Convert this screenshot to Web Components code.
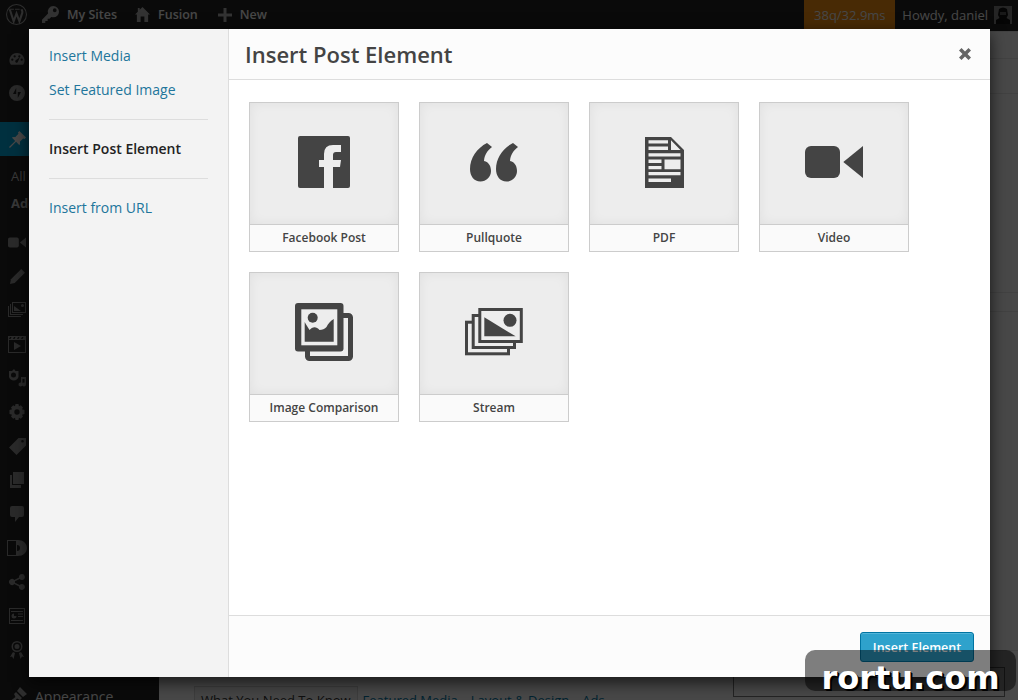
<!DOCTYPE html>
<html>
<head>
<meta charset="utf-8">
<title>Insert Post Element</title>
<style>
  html, body { margin: 0; height: 100%; overflow: hidden; background: #f1f1f1; font-family: "Open Sans", "Liberation Sans", sans-serif; }
</style>
</head>
<body>
<wp-admin>
  <admin-bar slot="bar"></admin-bar>
  <admin-menu slot="menu"></admin-menu>
  <edit-screen slot="screen"></edit-screen>
</wp-admin>
<media-modal>
  <nav-link slot="nav" kind="visited">Insert Media</nav-link>
  <nav-link slot="nav">Set Featured Image</nav-link>
  <nav-sep slot="nav"></nav-sep>
  <nav-link slot="nav" kind="active">Insert Post Element</nav-link>
  <nav-sep slot="nav"></nav-sep>
  <nav-link slot="nav" kind="visited">Insert from URL</nav-link>

  <element-tile icon="facebook" w="52" h="52">Facebook Post</element-tile>
  <element-tile icon="quote" w="48" h="39">Pullquote</element-tile>
  <element-tile icon="pdf" w="39" h="51">PDF</element-tile>
  <element-tile icon="video" w="58" h="32">Video</element-tile>
  <element-tile icon="compare" w="58" h="58">Image Comparison</element-tile>
  <element-tile icon="stream" w="58" h="48">Stream</element-tile>
</media-modal>
<water-mark>rortu.com</water-mark>

<script>
const ICONS = {
  // tile icons
  facebook: '<svg viewBox="0 0 52 52"><path fill-rule="evenodd" d="M2 0H50Q52 0 52 2V50Q52 52 50 52H35V31H42L43 24H35V19Q35 16 38 16H43V9H35Q26 9 26 18V24H21V31H26V52H2Q0 52 0 50V2Q0 0 2 0Z"/></svg>',
  quote: '<svg viewBox="0 0 48 39"><path d="M17 0L22 4C17 8 14.5 12 14 18C19 19 21 23.5 21 28C21 34 16 38.5 10.5 38.5C4 38.5 0 33 0 26C0 15 7 5 17 0Z"/><path transform="translate(26 0)" d="M17 0L22 4C17 8 14.5 12 14 18C19 19 21 23.5 21 28C21 34 16 38.5 10.5 38.5C4 38.5 0 33 0 26C0 15 7 5 17 0Z"/></svg>',
  pdf: '<svg viewBox="0 0 39 51"><path fill-rule="evenodd" d="M0 0H26L39 13V51H0ZM3.5 3.3V6.6H23V3.3ZM3.5 9.6V13H23V9.6ZM26 3.3V13H35.5ZM3.5 16.3V19.6H35.5V16.3ZM3.5 22.6V26H16.5V22.6ZM3.5 29V32.3H16.5V29ZM19.5 22.6V32.3H35.5V22.6ZM3.5 35V38.3H35.5V35ZM3.5 41.6V45H26V41.6Z"/></svg>',
  video: '<svg viewBox="0 0 58 32"><rect width="35" height="32" rx="6"/><path d="M38.3 16L58 0V32Z"/></svg>',
  compare: '<svg viewBox="0 0 58 58"><rect x="12.5" y="12.5" width="43" height="43" rx="2" fill="none" stroke="currentColor" stroke-width="5"/><rect width="48.5" height="48.5" rx="3"/><rect x="6.3" y="6.3" width="36" height="36" fill="#ededed"/><circle cx="17.7" cy="14.7" r="5"/><path d="M9.7 19C11 22 13 24 14.5 27C17 24 21 22.5 24.5 27C27 27 30 26 31.5 24C33 21 35 18 38.7 16V38.7H9.7Z"/></svg>',
  stream: '<svg viewBox="0 0 58 48"><rect x="1.5" y="14.2" width="42" height="31.6" fill="none" stroke="currentColor" stroke-width="3"/><rect x="8.2" y="7.5" width="41.3" height="32" fill="#ededed" stroke="currentColor" stroke-width="3"/><rect x="14.8" y="1.5" width="41.5" height="32" fill="#ededed" stroke="currentColor" stroke-width="3"/><path d="M19.3 9.3L50.6 28.3H19.3Z"/><circle cx="45" cy="12.3" r="6.5"/></svg>',
  // admin bar
  wp: '<svg viewBox="0 0 20 20"><circle cx="10" cy="10" r="9.500" fill="none" stroke="currentColor"/><path fill="none" stroke="currentColor" stroke-width="2" d="M3.700 5.500L7.300 16.500L10 9L12.800 16.500L15.500 8.500C16 7 15 6 14.800 5"/><path fill="none" stroke="currentColor" d="M3 5H7.500M8.500 5H13"/></svg>',
  key: '<svg viewBox="0 0 18 18"><path d="M12 0a6 6 0 0 1 0 12c-.8 0-1.500-.1-2.200-.4L8 13.500H6V16H3.500V18H0V14.500L6.400 8A6 6 0 0 1 12 0ZM13.500 2.500a2 2 0 1 0 0 4a2 2 0 0 0 0-4Z"/></svg>',
  home: '<svg viewBox="0 0 16 16"><path d="M8 0L16 8H14V16H10V10H6V16H2V8H0L3 5V1H5V3Z"/></svg>',
  plus: '<svg viewBox="0 0 14 14"><path d="M5.500 0H8.500V5.500H14V8.500H8.500V14H5.500V8.500H0V5.500H5.500Z"/></svg>',
  // admin menu
  gauge: '<svg viewBox="0 0 16 16"><path fill-rule="evenodd" d="M8 1a8 8 0 0 1 6.500 12.700H1.500A8 8 0 0 1 8 1ZM3 7a1.200 1.200 0 1 0 0 2.400A1.200 1.200 0 0 0 3 7ZM5.500 3.500a1.200 1.200 0 1 0 0 2.400a1.200 1.200 0 0 0 0-2.400ZM10.500 3.500a1.200 1.200 0 1 0 0 2.400a1.200 1.200 0 0 0 0-2.400ZM13 7a1.200 1.200 0 1 0 0 2.400A1.200 1.200 0 0 0 13 7ZM11 5.500L7 8.500a1.500 1.500 0 1 0 2 2Z"/></svg>',
  jet: '<svg viewBox="0 0 16 16"><path fill-rule="evenodd" d="M8 0a8 8 0 1 0 0 16A8 8 0 0 0 8 0ZM7.200 3V9H4ZM8.800 13V7H12Z"/></svg>',
  pin: '<svg viewBox="0 0 18 18"><path d="M11 0L18 7L16.500 8.500L15 8L11.500 11.500C12 13 11.800 14 11 15L7.500 11.500L1 18L0 17L6.500 10.500L3 7C4 6.200 5 6 6.500 6.500L10 3L9.500 1.500Z"/></svg>',
  pencil: '<svg viewBox="0 0 16 16"><path d="M12 0L16 4L5 15L0 16L1 11Z"/></svg>',
  media: '<svg viewBox="0 0 18 16"><path fill-rule="evenodd" d="M4 0H18V11H4ZM5 1V10H17V1ZM14.500 2a1.500 1.500 0 1 0 0 3a1.500 1.500 0 0 0 0-3ZM6 9V4L13 9ZM2 2H3V12H15V13H2ZM0 4H1V14H13V15H0Z"/></svg>',
  film: '<svg viewBox="0 0 18 17"><path fill-rule="evenodd" d="M0 0H18V17H0ZM1 4V16H17V4ZM6 6L13 10L6 14ZM2 1L1 3H2.500L3.500 1ZM6 1L5 3H6.500L7.500 1ZM10 1L9 3H10.500L11.500 1ZM14 1L13 3H14.500L15.500 1Z"/></svg>',
  mix: '<svg viewBox="0 0 18 18"><path fill-rule="evenodd" d="M6 0L7.500 2H10.500V8A5 5 0 0 1 1 8V2H4ZM5.500 3.500a2.500 2.500 0 1 0 0 5a2.500 2.500 0 0 0 0-5Z"/><path d="M13 8H18V15.500a2 2 0 1 1-1.500-2V10H14.500V15.500a2 2 0 1 1-1.500-2V8Z"/></svg>',
  gear: '<svg viewBox="0 0 16 16"><path fill-rule="evenodd" d="M6.500 0H9.500L10 2.200L11.800 1.200L14 3.400L13 5.300L15.500 6V10L13 10.700L14 12.600L11.800 14.800L10 13.800L9.500 16H6.500L6 13.800L4.200 14.800L2 12.600L3 10.700L.5 10V6L3 5.300L2 3.400L4.200 1.200L6 2.200ZM8 5.300a2.700 2.700 0 1 0 0 5.400a2.700 2.700 0 0 0 0-5.400Z"/></svg>',
  tag: '<svg viewBox="0 0 17 17"><path fill-rule="evenodd" d="M9.500 0H17V7.500L7.500 17L0 9.500ZM13.500 2a1.300 1.300 0 1 0 0 2.600a1.300 1.300 0 0 0 0-2.600Z"/></svg>',
  pages: '<svg viewBox="0 0 14 16"><path d="M3 0H14V12H3ZM0 3H2V13H11V16H0Z"/></svg>',
  bubble: '<svg viewBox="0 0 14 16"><path d="M2 0H12Q14 0 14 2V9Q14 11 12 11H9L5 16V11H2Q0 11 0 9V2Q0 0 2 0Z"/></svg>',
  disc: '<svg viewBox="0 0 20 16"><path fill-rule="evenodd" d="M0 0H11C16 0 20 3.500 20 8S16 16 11 16H0ZM1 1V15H9V1ZM10 5V11A3 3 0 0 0 10 5Z"/></svg>',
  share: '<svg viewBox="0 0 16 16"><path d="M13 0a3 3 0 1 1-2.300 5L6 7.300a3 3 0 0 1 0 1.400L10.700 11a3 3 0 1 1-.7 1.400L5.300 10a3 3 0 1 1 0-4L10 3.600A3 3 0 0 1 13 0Z"/></svg>',
  slides: '<svg viewBox="0 0 16 16"><path fill-rule="evenodd" d="M0 0H16V16H0ZM1 1V15H15V1ZM2 3H14V4H2ZM2 12H14V13H2ZM5 5.500a2.500 2.500 0 1 0 2.500 2.500H5ZM9 5.500H14V6.500H9ZM9 8H14V9H9Z"/></svg>',
  ribbon: '<svg viewBox="0 0 14 18"><path fill-rule="evenodd" d="M7 0a5.500 5.500 0 1 1 0 11A5.500 5.500 0 0 1 7 0ZM7 1.500a4 4 0 1 0 0 8a4 4 0 0 0 0-8ZM7 3a2.500 2.500 0 1 1 0 5a2.500 2.500 0 0 1 0-5ZM3 11L5 12L3.500 18L2 15.500L0 16ZM11 11L9 12L10.500 18L12 15.500L14 16Z"/></svg>',
  brush: '<svg viewBox="0 0 18 18"><path d="M11 0L18 7L14 10L8 4ZM7 5L13 11L11 13L8 11.500L3 18L0 15L6.500 10L5 7Z"/></svg>',
  avatar: '<svg viewBox="0 0 18 18"><rect width="18" height="18" fill="#7d7d7d"/><path fill="#111" d="M5 3Q9 0 13 3L14 9L12.500 12L16 14V18H2V14L5.500 12L4 9Z"/><rect x="6" y="6" width="6" height="3" fill="#555"/></svg>'
};

// svg icons by name, width and height set from attributes
class SvgIcon extends HTMLElement {
  connectedCallback() {
    const w = this.getAttribute("w") || 16;
    const h = this.getAttribute("h") || 16;
    this.attachShadow({ mode: "open" });
    this.shadowRoot.innerHTML = `
      <style>
        :host { display: block; width: ${w}px; height: ${h}px; flex: none; }
        svg { display: block; width: 100%; height: 100%; fill: currentColor; overflow: visible; }
      </style>
      ${ICONS[this.getAttribute("name")] || ""}
    `;
  }
}
customElements.define("svg-icon", SvgIcon);

class WpAdmin extends HTMLElement {
  constructor() {
    super();
    this.attachShadow({ mode: "open" });
    this.shadowRoot.innerHTML = `
      <style>
        :host { display: flex; flex-direction: column; width: 1018px; height: 700px; overflow: hidden; position: relative; }
        .body { display: flex; flex: 1; min-height: 0; }
        .veil { position: absolute; inset: 0; background: rgba(0,0,0,.7); }
      </style>
      <slot name="bar"></slot>
      <div class="body">
        <slot name="menu"></slot>
        <slot name="screen"></slot>
      </div>
      <div class="veil"></div>
    `;
  }
}
customElements.define("wp-admin", WpAdmin);

class AdminBar extends HTMLElement {
  constructor() {
    super();
    this.attachShadow({ mode: "open" });
    this.shadowRoot.innerHTML = `
      <style>
        :host { display: flex; align-items: flex-start; height: 31px; flex: none; background: #222; color: #eee; font-size: 12.500px; font-weight: 600; }
        .row { height: 29px; display: flex; align-items: center; }
        .wp { margin-left: 6px; color: #999; }
        .key { margin-left: 15px; color: #aaa; }
        .t { margin-left: 8px; }
        .home { margin-left: 18px; color: #aaa; }
        .plus { margin-left: 20px; color: #aaa; }
        .push { flex: 1; }
        .perf { width: 91px; height: 31px; background: #f08c11; color: #eee; font-weight: 400; font-size: 13px; display: flex; align-items: flex-start; justify-content: center; line-height: 30px; }
        .howdy { margin-left: 7px; font-weight: 400; font-size: 13px; }
        .ava { margin: 0 6px 0 6px; }
      </style>
      <div class="row"><svg-icon class="wp" name="wp" w="21" h="21"></svg-icon></div>
      <div class="row"><svg-icon class="key" name="key" w="17" h="17"></svg-icon><span class="t">My Sites</span></div>
      <div class="row"><svg-icon class="home" name="home" w="15" h="15"></svg-icon><span class="t">Fusion</span></div>
      <div class="row"><svg-icon class="plus" name="plus" w="14" h="14"></svg-icon><span class="t">New</span></div>
      <div class="push"></div>
      <div class="perf">38q/32.9ms</div>
      <div class="row"><span class="howdy">Howdy, daniel</span><svg-icon class="ava" name="avatar" w="18" h="18"></svg-icon></div>
    `;
  }
}
customElements.define("admin-bar", AdminBar);

class AdminMenu extends HTMLElement {
  constructor() {
    super();
    const row = (name, w, h, extra = "") => `<div class="item ${extra}"><svg-icon name="${name}" w="${w}" h="${h}"></svg-icon></div>`;
    this.attachShadow({ mode: "open" });
    this.shadowRoot.innerHTML = `
      <style>
        :host { display: flex; flex-direction: column; width: 159px; flex: none; background: #222; color: #8c8c8c; font-size: 13px; padding-top: 11px; box-sizing: border-box; }
        .item { height: 34px; flex: none; width: 34px; display: flex; align-items: center; justify-content: center; }
        .active { width: 100%; background: #00a0d2; justify-content: flex-start; color: #eee; box-sizing: border-box; padding-left: 9px; margin-top: 12px; }
        .sub { padding-left: 11px; height: 27px; line-height: 27px; color: #bbb; }
        .sub.b { font-weight: 700; }
        .subs { padding: 7px 0 8px; }
        .app { display: flex; align-items: center; height: 34px; margin-top: 12px; color: #eee; font-size: 14px; flex: none; }
        .app div { width: 35px; display: flex; justify-content: center; color: #999; }
      </style>
      ${row("gauge", 16, 15)}
      ${row("jet", 16, 16)}
      ${row("pin", 17, 17, "active")}
      <div class="subs"><div class="sub">All</div><div class="sub b">Add</div></div>
      ${row("video", 18, 11)}
      ${row("pencil", 15, 15)}
      ${row("media", 18, 16)}
      ${row("film", 18, 17)}
      ${row("mix", 18, 18)}
      ${row("gear", 16, 16)}
      ${row("tag", 17, 17)}
      ${row("pages", 14, 16)}
      ${row("bubble", 14, 16)}
      ${row("disc", 20, 16)}
      ${row("share", 16, 16)}
      ${row("slides", 16, 16)}
      ${row("ribbon", 14, 18)}
      <div class="app"><div><svg-icon name="brush" w="18" h="18"></svg-icon></div><span>Appearance</span></div>
    `;
  }
}
customElements.define("admin-menu", AdminMenu);

class EditScreen extends HTMLElement {
  constructor() {
    super();
    this.attachShadow({ mode: "open" });
    this.shadowRoot.innerHTML = `
      <style>
        :host { display: block; flex: 1; min-width: 0; position: relative; background: #f1f1f1; overflow: hidden; font-size: 13px; color: #333; }
        .tabs { position: absolute; left: 35px; top: 655px; display: flex; gap: 13px; white-space: nowrap; }
        .tabs b { font-weight: 400; border: 1px solid #ccc; background: #e8e8e8; padding: 4px 6px; margin-right: -8px; }
        .tabs span { color: #0074a2; padding-top: 5px; }
        .box { position: absolute; right: 13px; top: 636px; width: 272px; height: 30px; border: 1px solid #777; box-sizing: border-box; }
        .side { position: absolute; left: 825px; top: 0; width: 40px; height: 28px; border: 1px solid #ddd; box-sizing: border-box; }
        .side2 { top: 62px; height: 200px; }
        .side3 { top: 280px; height: 340px; }
      </style>
      <div class="side"></div><div class="side side2"></div><div class="side side3"></div>
      <div class="tabs"><b>What You Need To Know</b><span>Featured Media</span><span>Layout &amp; Design</span><span>Ads</span></div>
      <div class="box"></div>
    `;
  }
}
customElements.define("edit-screen", EditScreen);

class MediaModal extends HTMLElement {
  constructor() {
    super();
    this.attachShadow({ mode: "open" });
    this.shadowRoot.innerHTML = `
      <style>
        :host { position: absolute; left: 29px; top: 29px; width: 961px; height: 648px; display: flex; background: #fff; box-shadow: 0 5px 15px rgba(0,0,0,.7); color: #444; }
        aside { width: 200px; flex: none; box-sizing: border-box; background: #f3f3f3; border-right: 1px solid #ddd; padding: 10px 20px; }
        main { flex: 1; display: flex; flex-direction: column; min-width: 0; }
        header { height: 51px; flex: none; box-sizing: border-box; background: #fcfcfc; border-bottom: 1px solid #ddd; display: flex; align-items: center; justify-content: space-between; padding: 0 19px 0 16px; }
        h1 { margin: 0; font-size: 22px; font-weight: 600; color: #444; }
        .close { color: #666; width: 12px; height: 12px; }
        .close svg { display: block; width: 100%; height: 100%; fill: currentColor; }
        .grid { flex: 1; display: grid; grid-template-columns: repeat(auto-fill, 150px); grid-auto-rows: 150px; gap: 20px; padding: 22px 20px; align-content: start; }
        footer { height: 62px; flex: none; box-sizing: border-box; background: #fcfcfc; border-top: 1px solid #ddd; display: flex; justify-content: flex-end; align-items: flex-start; padding: 16px 16px 0 0; }
        button { width: 114px; height: 30px; box-sizing: border-box; border: 1px solid #0074a2; border-radius: 3px; background: #2ea2cc; color: #fff; font: 600 12.500px "Open Sans", "Liberation Sans", sans-serif; box-shadow: inset 0 1px 0 rgba(120,200,230,.5); padding: 0; }
      </style>
      <aside><slot name="nav"></slot></aside>
      <main>
        <header>
          <h1>Insert Post Element</h1>
          <div class="close"><svg viewBox="0 0 12 12"><path d="M2.500 0L6 3.500L9.500 0L12 2.500L8.500 6L12 9.500L9.500 12L6 8.500L2.500 12L0 9.500L3.500 6L0 2.500Z"/></svg></div>
        </header>
        <div class="grid"><slot></slot></div>
        <footer><button>Insert Element</button></footer>
      </main>
    `;
  }
}
customElements.define("media-modal", MediaModal);

class NavLink extends HTMLElement {
  constructor() {
    super();
    this.attachShadow({ mode: "open" });
    this.shadowRoot.innerHTML = `
      <style>
        :host { display: block; height: 34px; line-height: 34px; font-size: 14px; color: #21759b; white-space: nowrap; }
        :host([kind="active"]) { color: #222; font-weight: 600; }
      </style>
      <slot></slot>
    `;
  }
}
customElements.define("nav-link", NavLink);

class NavSep extends HTMLElement {
  constructor() {
    super();
    this.attachShadow({ mode: "open" });
    this.shadowRoot.innerHTML = `<style>:host { display: block; height: 1px; margin: 12px 0; background: #ddd; }</style>`;
  }
}
customElements.define("nav-sep", NavSep);

class ElementTile extends HTMLElement {
  connectedCallback() {
    this.attachShadow({ mode: "open" });
    this.shadowRoot.innerHTML = `
      <style>
        :host { display: flex; flex-direction: column; box-sizing: border-box; width: 150px; height: 150px; border: 1px solid #ccc; }
        .thumb { flex: 1; background: #ededed; box-shadow: inset 0 0 12px rgba(0,0,0,.06); display: flex; align-items: center; justify-content: center; color: #444; padding-bottom: 3px; }
        .label { height: 27px; flex: none; box-sizing: border-box; border-top: 1px solid #ccc; background: #fafafa; text-align: center; font-size: 12px; font-weight: 600; line-height: 25px; color: #444; }
      </style>
      <div class="thumb"><svg-icon name="${this.getAttribute("icon")}" w="${this.getAttribute("w")}" h="${this.getAttribute("h")}"></svg-icon></div>
      <div class="label"><slot></slot></div>
    `;
  }
}
customElements.define("element-tile", ElementTile);

class WaterMark extends HTMLElement {
  constructor() {
    super();
    this.attachShadow({ mode: "open" });
    this.shadowRoot.innerHTML = `
      <style>
        :host { position: absolute; left: 805px; top: 650px; width: 211px; height: 41px; border-radius: 10px; background: rgba(0,0,0,.5); color: #fff; font: 700 32px/56px "DejaVu Sans", sans-serif; text-align: center; text-shadow: 1px 1px 0 #000, 2px 2px 0 #000; overflow: visible; white-space: nowrap; }
      </style>
      <slot></slot>
    `;
  }
}
customElements.define("water-mark", WaterMark);
</script>
</body>
</html>
